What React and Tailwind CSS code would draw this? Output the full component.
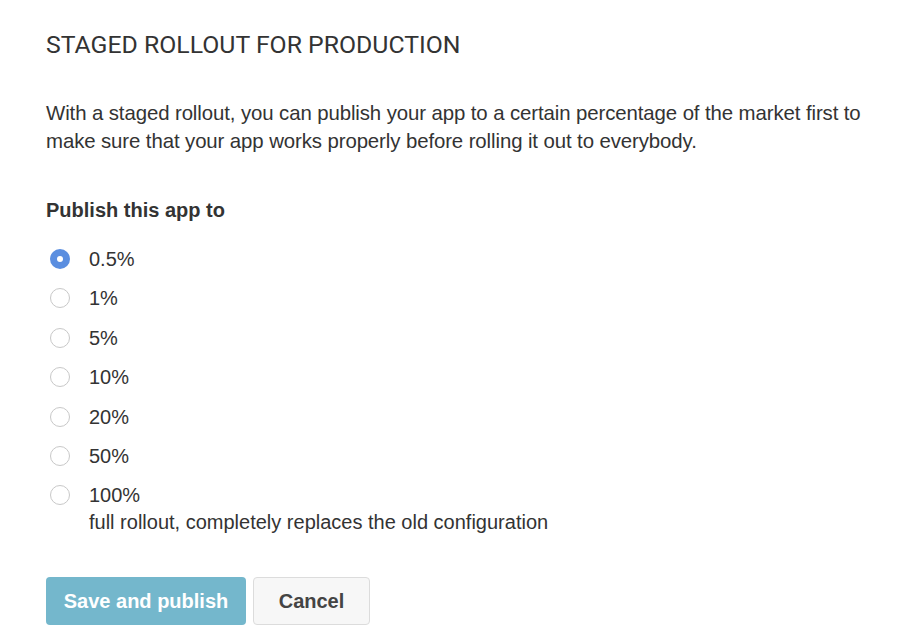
export default function App() {
  const opts = ["0.5%", "1%", "5%", "10%", "20%", "50%", "100%"];
  return (
    <div className="w-[913px] h-[642px] bg-white overflow-hidden" style={{ fontFamily: '"Liberation Sans", Arial, sans-serif' }}>
      <div className="pl-[46px] pt-[30px]">
        <h1 className="text-[24.8px] leading-[30px] text-[#333]" style={{ fontFamily: 'Roboto, sans-serif' }}>
          STAGED ROLLOUT FOR PRODUCTION
        </h1>
        <p className="mt-[39px] text-[20.4px] leading-[28px] text-[#333] w-[830px] tracking-[-0.1px]">
          With a staged rollout, you can publish your app to a certain percentage of the market first to make sure that your app works properly before rolling it out to everybody.
        </p>
        <div className="mt-[43px] text-[20px] leading-[24px] font-bold text-[#333]">Publish this app to</div>
        <div className="mt-[25px] flex flex-col">
          {opts.map((o, i) => (
            <div key={o} className="flex items-start min-h-[39.4px]">
              <div className="w-[43px] flex justify-start pl-[4px] pt-[2px]">
                {i === 0 ? (
                  <div className="w-[20px] h-[20px] rounded-full bg-[#5a8ee0] flex items-center justify-center">
                    <div className="w-[6px] h-[6px] rounded-full bg-white" />
                  </div>
                ) : (
                  <div className="w-[20px] h-[20px] rounded-full border border-[#c8c8c8] bg-white" />
                )}
              </div>
              <div className="text-[20px] leading-[24px] text-[#333]">
                {o}
                {i === 6 && (
                  <div className="mt-[3px] text-[#333]">full rollout, completely replaces the old configuration</div>
                )}
              </div>
            </div>
          ))}
        </div>
        <div className="mt-[43px] flex gap-[7px]">
          <button className="w-[200px] h-[48px] rounded-[4px] bg-[#74b7cc] text-white font-bold text-[20px]">
            Save and publish
          </button>
          <button className="w-[117px] h-[48px] rounded-[4px] bg-[#f7f7f7] border border-[#dcdcdc] text-[#444] font-bold text-[20px]">
            Cancel
          </button>
        </div>
      </div>
    </div>
  );
}
